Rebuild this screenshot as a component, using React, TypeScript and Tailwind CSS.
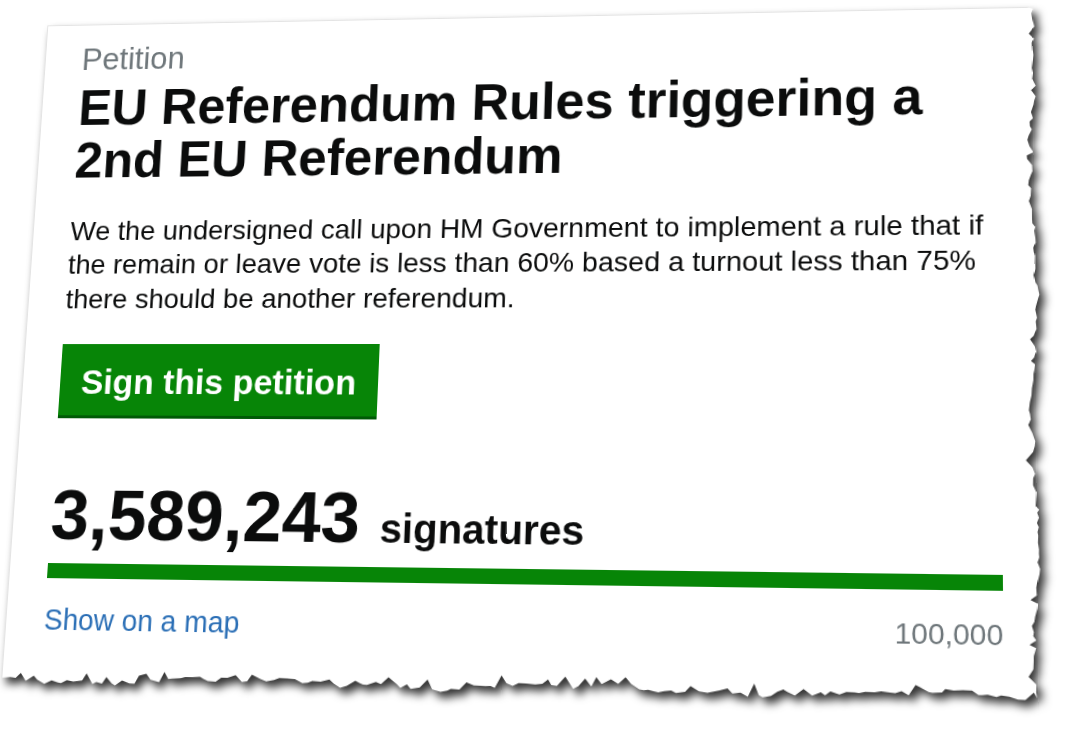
import { useMemo } from "react"

type Pt = [number, number]

// flat layout -> photographed clipping (content box corners)
const FLAT: Pt[] = [[40, 108], [978, 108], [40, 560], [978, 560]]
const PHOTO: Pt[] = [[77.6, 125], [1000, 113], [48, 563], [1003, 575]]

function homography(src: Pt[], dst: Pt[]) {
  const a: number[][] = []
  for (let i = 0; i < 4; i++) {
    const [x, y] = src[i]
    const [u, v] = dst[i]
    a.push([x, y, 1, 0, 0, 0, -u * x, -u * y, u])
    a.push([0, 0, 0, x, y, 1, -v * x, -v * y, v])
  }
  for (let c = 0; c < 8; c++) {
    let p = c
    for (let r = c + 1; r < 8; r++) {
      if (Math.abs(a[r][c]) > Math.abs(a[p][c])) p = r
    }
    const tmp = a[c]
    a[c] = a[p]
    a[p] = tmp
    for (let r = 0; r < 8; r++) {
      if (r === c) continue
      const f = a[r][c] / a[c][c]
      for (let k = c; k < 9; k++) a[r][k] -= f * a[c][k]
    }
  }
  const h = a.map((row, i) => row[8] / row[i])
  return `matrix3d(${h[0]},${h[3]},0,${h[6]},${h[1]},${h[4]},0,${h[7]},0,0,1,0,${h[2]},${h[5]},0,1)`
}

function tornEdge(w: number, h: number) {
  let seed = 11
  const rnd = () => {
    seed = (seed * 9301 + 49297) % 233280
    return seed / 233280
  }
  const right = w - 10
  const bottom = h - 16
  const pts: string[] = ["0px 0px", `${right - 4}px 0px`]

  for (let y = 2; y < bottom; y += 3 + rnd() * 5) {
    const wave = Math.sin(y / 37) * 2.5 + Math.sin(y / 11) * 1.2
    const spike = rnd() > 0.85 ? -(2 + rnd() * 4) : 0
    pts.push(`${right + wave + (rnd() - 0.5) * 4 + spike}px ${y}px`)
  }

  for (let x = right; x > 0; x -= 3 + rnd() * 6) {
    const wave = Math.sin(x / 53) * 3 + Math.sin(x / 17) * 1.5
    const spike = rnd() > 0.8 ? -(3 + rnd() * 6) : 0
    pts.push(`${x}px ${bottom + wave + (rnd() - 0.5) * 5 + spike}px`)
  }
  pts.push(`0px ${bottom}px`)

  return `polygon(${pts.join(",")})`
}

export default function App() {
  const transform = useMemo(() => homography(FLAT, PHOTO), [])
  const clipPath = useMemo(() => tornEdge(1019, 690), [])

  return (
    <div className="w-[1068px] h-[730px] overflow-hidden bg-white">

      <div className="w-[1019px] h-[700px] origin-top-left" style={{ transform }}>

        <div className="[filter:drop-shadow(5px_6px_4px_rgba(0,0,0,0.8))]">

          <div
            style={{ clipPath }}
            className="w-[1019px] h-[690px] bg-white border-t border-l border-[#e4e4e4] pl-[39px] pr-[41px] pt-[17px] font-['Liberation_Sans',Arial,sans-serif] text-[#0b0c0c]"
          >

            <p className="text-[33px] leading-[40px] text-[#6f777b]">
              Petition
            </p>

            <h1 className="mt-[4px] text-[53px] leading-[56px] font-bold whitespace-nowrap">
              EU Referendum Rules triggering a
              <br />
              2nd EU Referendum
            </h1>

            <p className="mt-[28.5px] text-[28.5px] leading-[35.5px] whitespace-nowrap">
              We the undersigned call upon HM Government to implement a rule that if
              <br />
              the remain or leave vote is less than 60% based a turnout less than 75%
              <br />
              there should be another referendum.
            </p>

            <button className="mt-[29px] block h-[73px] pt-[4px] px-[22px] leading-[69px] bg-[#078507] text-white text-[35px] font-bold shadow-[0_3px_0_#005a06]">
              Sign this petition
            </button>

            <div className="mt-[60.7px] flex items-baseline gap-[20px] font-bold">

              <span className="text-[71px] leading-[80px]">
                3,589,243
              </span>

              <span className="text-[40px] leading-[48px]">
                signatures
              </span>

            </div>

            <div className="mt-[8.3px] h-[15px] bg-[#078507]" />

            <div className="mt-[23px] flex items-baseline justify-between">

              <span className="text-[28.7px] leading-[36px] text-[#2b6fb6]">
                Show on a map
              </span>

              <span className="text-[28px] leading-[36px] text-[#6f777b]">
                100,000
              </span>

            </div>

          </div>
        </div>
      </div>
    </div>
  )
}
